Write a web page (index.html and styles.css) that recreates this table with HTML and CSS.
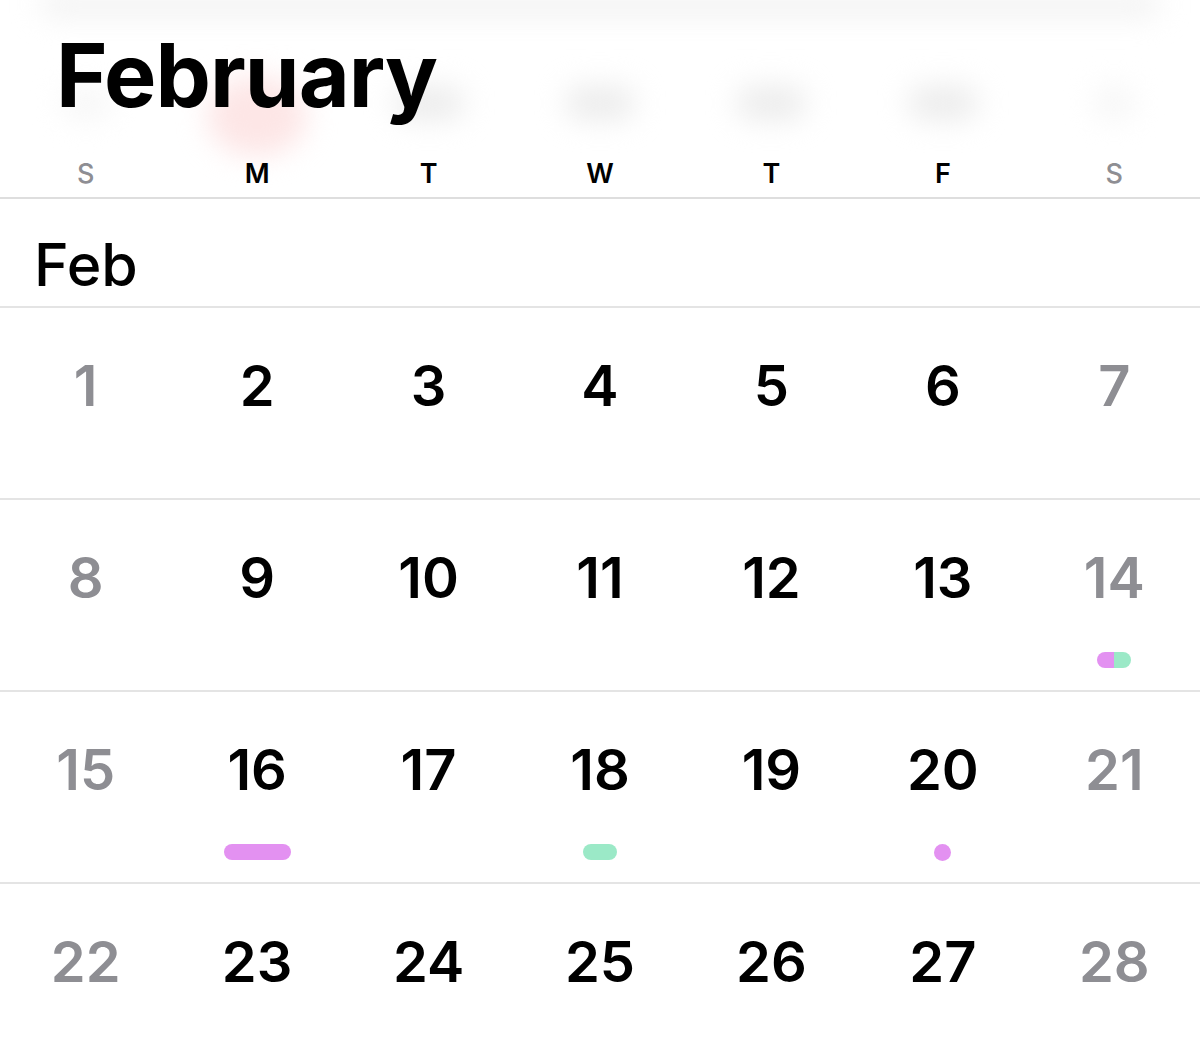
FILE: index.html
```html
<!DOCTYPE html>
<html lang="en">
<head>
<meta charset="utf-8">
<title>February</title>
<link rel="stylesheet" href="styles.css">
</head>
<body>
<div class="cal">
  <header class="header">
    <div class="ghost" aria-hidden="true">
      <div class="ghost-band"></div>
      <div class="ghost-row">
        <span class="blob b-empty"></span>
        <span class="blob b-red"></span>
        <span class="blob b-gray"></span>
        <span class="blob b-gray"></span>
        <span class="blob b-gray"></span>
        <span class="blob b-gray"></span>
        <span class="blob b-light"></span>
      </div>
    </div>
    <h1 class="title">February</h1>
    <div class="weekdays">
      <span class="wd weekend">S</span>
      <span class="wd">M</span>
      <span class="wd">T</span>
      <span class="wd">W</span>
      <span class="wd">T</span>
      <span class="wd">F</span>
      <span class="wd weekend">S</span>
    </div>
  </header>

  <div class="month-label">Feb</div>

  <div class="week">
    <div class="day weekend"><span class="num">1</span></div>
    <div class="day"><span class="num">2</span></div>
    <div class="day"><span class="num">3</span></div>
    <div class="day"><span class="num">4</span></div>
    <div class="day"><span class="num">5</span></div>
    <div class="day"><span class="num">6</span></div>
    <div class="day weekend"><span class="num">7</span></div>
  </div>

  <div class="week">
    <div class="day weekend"><span class="num">8</span></div>
    <div class="day"><span class="num">9</span></div>
    <div class="day"><span class="num">10</span></div>
    <div class="day"><span class="num">11</span></div>
    <div class="day"><span class="num">12</span></div>
    <div class="day"><span class="num">13</span></div>
    <div class="day weekend"><span class="num">14</span><span class="mark mark-split"><i class="half pink"></i><i class="half green"></i></span></div>
  </div>

  <div class="week">
    <div class="day weekend"><span class="num">15</span></div>
    <div class="day"><span class="num">16</span><span class="mark mark-long pink"></span></div>
    <div class="day"><span class="num">17</span></div>
    <div class="day"><span class="num">18</span><span class="mark mark-short green"></span></div>
    <div class="day"><span class="num">19</span></div>
    <div class="day"><span class="num">20</span><span class="mark mark-dot pink"></span></div>
    <div class="day weekend"><span class="num">21</span></div>
  </div>

  <div class="week last">
    <div class="day weekend"><span class="num">22</span></div>
    <div class="day"><span class="num">23</span></div>
    <div class="day"><span class="num">24</span></div>
    <div class="day"><span class="num">25</span></div>
    <div class="day"><span class="num">26</span></div>
    <div class="day"><span class="num">27</span></div>
    <div class="day weekend"><span class="num">28</span></div>
  </div>
</div>
</body>
</html>
```

FILE: styles.css
```css
* { box-sizing: border-box; margin: 0; padding: 0; }

html, body {
  background: #ffffff;
  width: 1200px;
  height: 1039px;
  overflow: hidden;
}

body {
  font-family: Inter, "Liberation Sans", Arial, sans-serif;
  color: #000;
}

.cal {
  width: 1200px;
}

.header {
  position: relative;
  display: flex;
  flex-direction: column;
  height: 199px;
  padding-top: 31px;
  border-bottom: 2px solid #dedede;
  overflow: hidden;
}

.ghost {
  position: absolute;
  inset: 0;
  filter: blur(14px);
  z-index: 0;
}

.ghost-band {
  height: 22px;
  margin: -6px 40px 0 40px;
  background: #f1f1f1;
  border-radius: 20px;
}

.ghost-row {
  display: grid;
  grid-template-columns: repeat(7, 1fr);
  margin-top: 70px;
  justify-items: center;
}

.blob {
  display: block;
  width: 70px;
  height: 34px;
  border-radius: 20px;
  background: #ececec;
}

.blob.b-empty { background: #f7f7f7; width: 50px; }
.blob.b-light { background: #f6f6f6; width: 40px; }
.blob.b-red {
  width: 100px;
  height: 80px;
  margin-top: -10px;
  border-radius: 50%;
  background: #fde6e6;
}

.title {
  position: relative;
  z-index: 1;
  font-size: 88px;
  line-height: 1;
  font-weight: 700;
  letter-spacing: -1px;
  padding-left: 56px;
}

.weekdays {
  position: relative;
  z-index: 1;
  display: grid;
  grid-template-columns: repeat(7, 1fr);
  margin-top: 41px;
}

.wd {
  text-align: center;
  font-size: 27px;
  line-height: 1;
  font-weight: 600;
  color: #000;
}

.wd.weekend { color: #8e8e93; font-weight: 500; }

.month-label {
  height: 109px;
  padding-top: 36px;
  padding-left: 34px;
  font-size: 59px;
  line-height: 1;
  font-weight: 500;
  border-bottom: 2px solid #e4e4e4;
}

.week {
  display: grid;
  grid-template-columns: repeat(7, 1fr);
  height: 192px;
  border-bottom: 2px solid #e4e4e4;
}

.week.last { border-bottom: none; }

.day {
  display: flex;
  flex-direction: column;
  align-items: center;
  padding-top: 50px;
}

.num {
  font-size: 56px;
  line-height: 1;
  font-weight: 600;
  color: #000;
}

.day.weekend .num { color: #8e8e93; }

.mark {
  display: flex;
  margin-top: 46px;
  height: 16px;
  border-radius: 8px;
  overflow: hidden;
}

.mark-split { width: 34px; }
.mark-long { width: 67px; }
.mark-short { width: 34px; }
.mark-dot { width: 17px; height: 17px; border-radius: 50%; }

.half { flex: 1; display: block; }

.pink { background: #e391f1; }
.green { background: #9be9c7; }
```
